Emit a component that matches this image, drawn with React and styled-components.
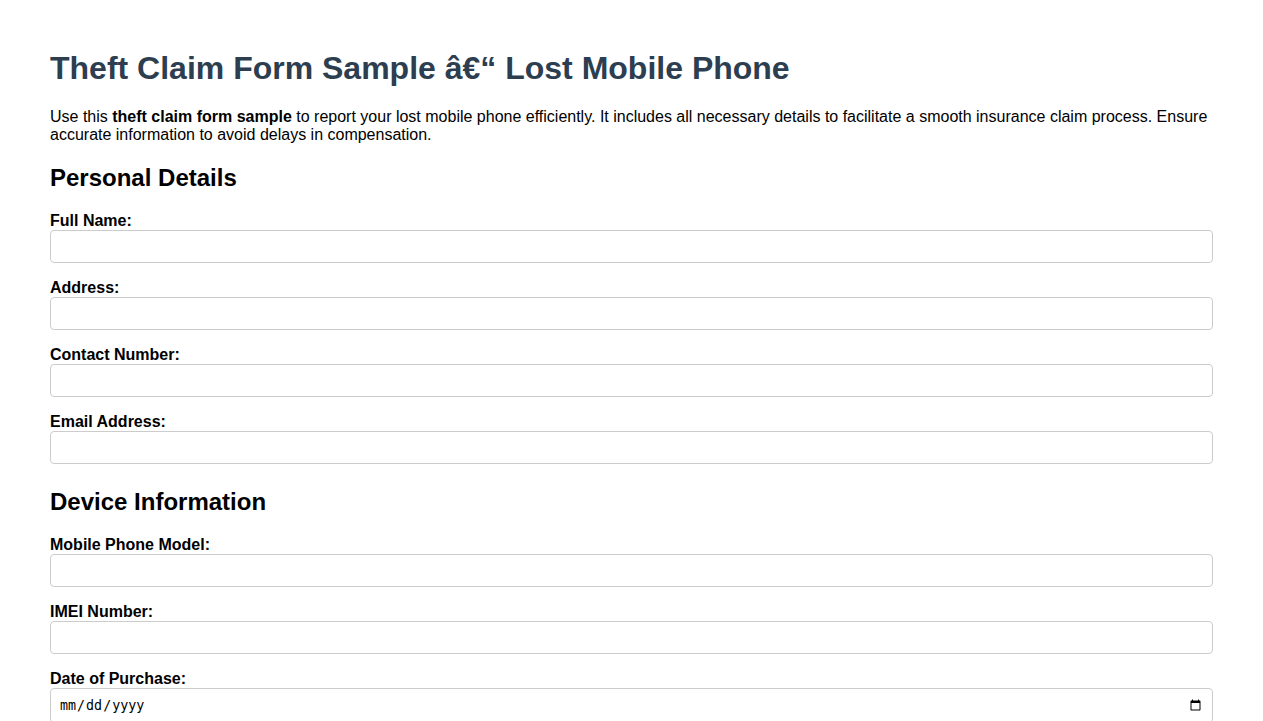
import React from "react";
import styled, { createGlobalStyle } from "styled-components";

const GlobalStyle = createGlobalStyle`
  html, body { background: #ffffff; }
  body {
    margin: 50px;
    font-family: "Liberation Sans", Arial, sans-serif;
    font-size: 16px;
    color: #000000;
  }
`;

const Title = styled.h1`
  font-size: 32px;
  font-weight: bold;
  color: #2c3e50;
  margin: 0 0 21px 0;
  line-height: normal;
`;

const Intro = styled.p`
  margin: 0 0 20px 0;
  line-height: normal;
`;

const Section = styled.section`
  margin-bottom: ${(p) => (p.$last ? "0" : "24px")};
`;

const SectionTitle = styled.h2`
  font-size: 24px;
  font-weight: bold;
  margin: 0 0 19px 0;
  line-height: normal;
`;

const Field = styled.div`
  display: flex;
  flex-direction: column;
  margin-bottom: 15px;
  &:last-child {
    margin-bottom: 0;
  }
`;

const Label = styled.label`
  display: block;
  font-weight: bold;
  padding-top: 1px;
  margin-bottom: 0;
  line-height: normal;
`;

const Input = styled.input`
  display: block;
  width: 100%;
  box-sizing: border-box;
  padding: 8px;
  border: 1px solid #cccccc;
  border-radius: 4px;
  margin: 0;
  background: #ffffff;
`;

const personal = ["Full Name:", "Address:", "Contact Number:", "Email Address:"];
const device = [
  { label: "Mobile Phone Model:", type: "text" },
  { label: "IMEI Number:", type: "text" },
  { label: "Date of Purchase:", type: "date" },
];

export default function App() {
  return (
    <>
      <GlobalStyle />
      <Title>Theft Claim Form Sample â€“ Lost Mobile Phone</Title>
      <Intro>
        Use this <strong>theft claim form sample</strong> to report your lost mobile phone
        efficiently. It includes all necessary details to facilitate a smooth insurance claim
        process. Ensure accurate information to avoid delays in compensation.
      </Intro>
      <form onSubmit={(e) => e.preventDefault()}>
        <Section>
          <SectionTitle>Personal Details</SectionTitle>
          {personal.map((l, i) => (
            <Field key={l}>
              <Label htmlFor={`p${i}`}>{l}</Label>
              <Input id={`p${i}`} type="text" />
            </Field>
          ))}
        </Section>
        <Section $last>
          <SectionTitle>Device Information</SectionTitle>
          {device.map((d, i) => (
            <Field key={d.label}>
              <Label htmlFor={`d${i}`}>{d.label}</Label>
              <Input id={`d${i}`} type={d.type} />
            </Field>
          ))}
        </Section>
      </form>
    </>
  );
}
